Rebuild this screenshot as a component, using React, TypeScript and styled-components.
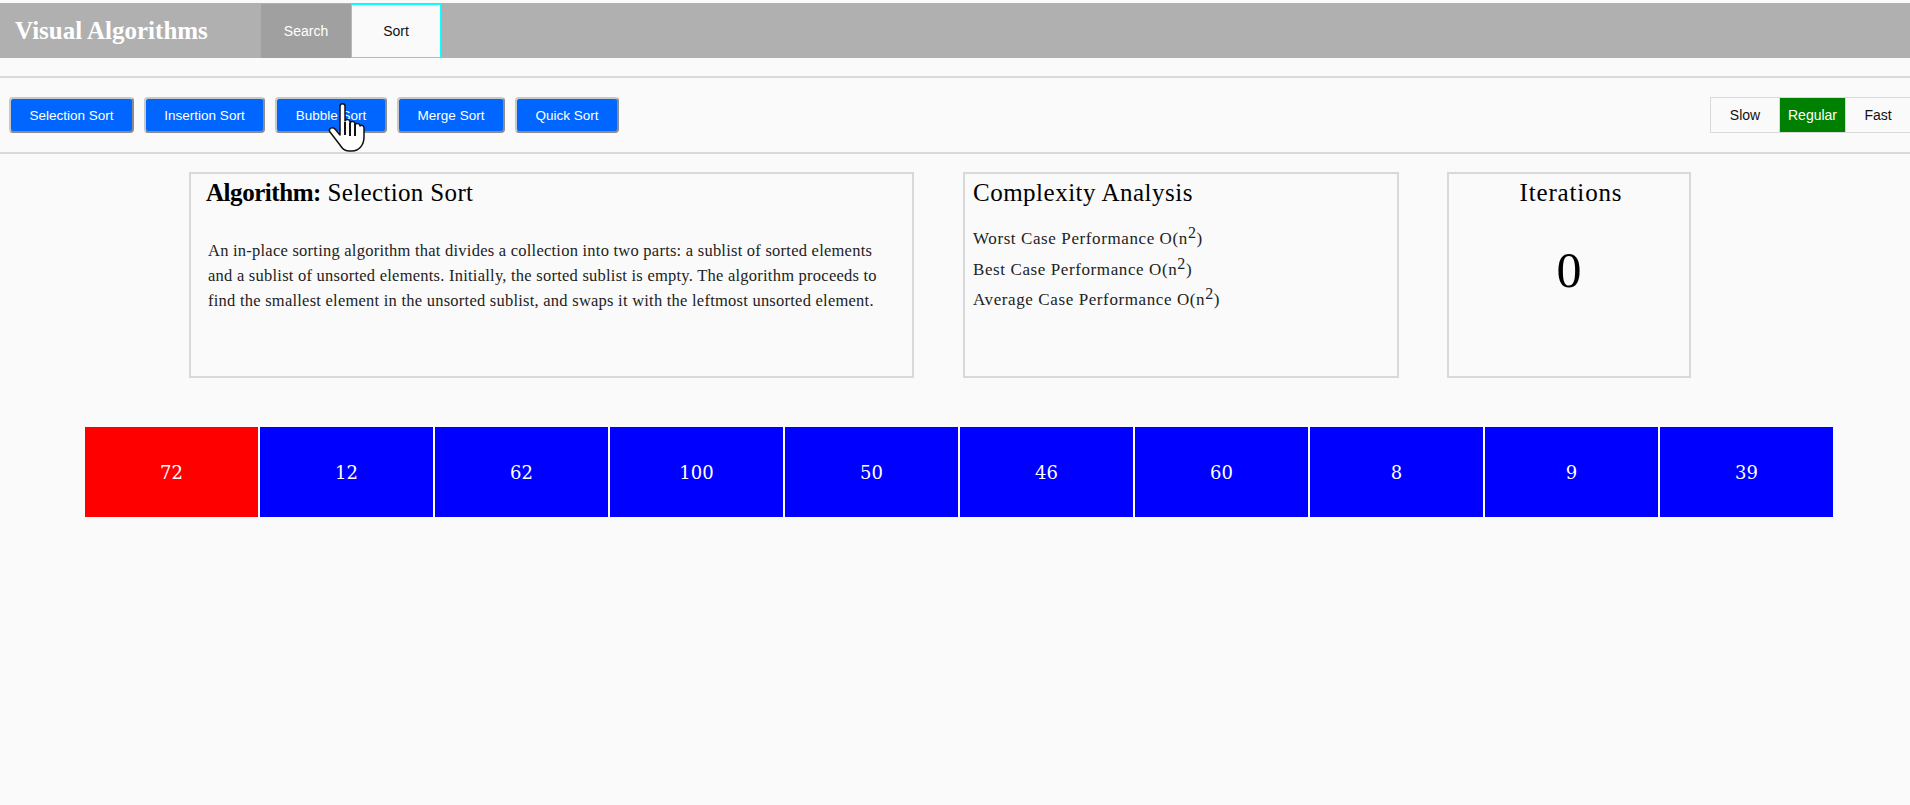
import { createGlobalStyle, styled } from 'styled-components'

const GlobalStyle = createGlobalStyle`
  html, body {
    margin: 0;
    padding: 0;
    background: #fafafa;
    overflow: hidden;
  }
  body {
    font-family: 'Liberation Sans', Arial, sans-serif;
  }
`

const serif = `'Liberation Serif', 'Times New Roman', serif`

const Page = styled.div`
  position: relative;
  height: 805px;
  padding-top: 3px;
  box-sizing: border-box;
  background: #fafafa;
  overflow: hidden;
`

const Header = styled.header`
  display: flex;
  height: 55px;
  background: #b0b0b0;
`

const Logo = styled.div`
  width: 261px;
  box-sizing: border-box;
  padding-left: 15px;
  line-height: 55px;
  font-family: ${serif};
  font-weight: bold;
  font-size: 25px;
  color: #fff;
`

const Tab = styled.div<{ $active?: boolean }>`
  display: flex;
  align-items: center;
  justify-content: center;
  width: 90px;
  margin-top: 1px;
  box-sizing: border-box;
  font-size: 14px;
  color: ${p => (p.$active ? '#111' : '#fff')};
  background: ${p => (p.$active ? '#fafafa' : '#a0a0a0')};
  border: ${p => (p.$active ? '1px solid #1ff' : 'none')};
`

const Toolbar = styled.div`
  display: flex;
  justify-content: space-between;
  align-items: center;
  height: 78px;
  margin-top: 18px;
  box-sizing: border-box;
  padding-left: 9px;
  border-top: 2px solid #d8d8d8;
  border-bottom: 2px solid #d8d8d8;
`

const AlgoButtons = styled.div`
  display: flex;
  gap: 10px;
`

const AlgoButton = styled.button<{ $width: number }>`
  width: ${p => p.$width}px;
  height: 36px;
  padding: 0;
  font-family: 'Liberation Sans', Arial, sans-serif;
  font-size: 13.5px;
  color: #fff;
  background: #0066ff;
  border: 2px solid;
  border-color: #c8c8c8 #8c8c8c #8c8c8c #c8c8c8;
  border-radius: 4px;
`

const SpeedGroup = styled.div`
  display: flex;
  height: 36px;
  margin-right: -1px;
  box-sizing: border-box;
  border: 1px solid #d8d8d8;
`

const Speed = styled.div<{ $width: number; $active?: boolean }>`
  display: flex;
  align-items: center;
  justify-content: center;
  width: ${p => p.$width}px;
  box-sizing: border-box;
  font-size: 14px;
  color: ${p => (p.$active ? '#fff' : '#111')};
  background: ${p => (p.$active ? '#008000' : 'transparent')};
  border-left: ${p => (p.$active ? '1px solid #d8d8d8' : 'none')};
  border-right: ${p => (p.$active ? '1px solid #d8d8d8' : 'none')};
`

const Panels = styled.section`
  display: flex;
  gap: 48px;
  margin-top: 18px;
  padding-left: 189px;
`

const Panel = styled.div<{ $width: number }>`
  width: ${p => p.$width}px;
  height: 206px;
  box-sizing: border-box;
  border: 2px solid #d8d8d8;
  font-family: ${serif};
  color: #111;
`

const AlgorithmPanel = styled(Panel)`
  margin-right: 1px;
`

const PanelTitle = styled.h2<{ $center?: boolean; $left: number; $spacing: number }>`
  margin: 0;
  padding-left: ${p => p.$left}px;
  padding-top: 4px;
  text-align: ${p => (p.$center ? 'center' : 'left')};
  font-size: 25px;
  line-height: 30px;
  font-weight: normal;
  letter-spacing: ${p => p.$spacing}px;
  color: #000;

  b {
    font-weight: bold;
    letter-spacing: -0.45px;
  }
`

const Description = styled.p`
  margin: 30px 0 0;
  padding: 0 24px 0 17px;
  font-size: 16.5px;
  line-height: 25px;
  letter-spacing: 0.24px;
  color: #222;
`

const ComplexityList = styled.div`
  margin-top: 16px;
  padding-left: 8px;
`

const ComplexityRow = styled.div`
  height: 30.5px;
  line-height: 30.5px;
  font-size: 17px;
  letter-spacing: 0.6px;
  color: #222;

  sup {
    font-size: 16px;
    line-height: 0;
    vertical-align: 6px;
  }
`

const Count = styled.div`
  margin-top: 34px;
  text-align: center;
  font-size: 50px;
  line-height: 56px;
  color: #000;
`

const Bars = styled.section`
  display: grid;
  grid-template-columns: repeat(10, 173px);
  gap: 2px;
  margin-top: 49px;
  padding-left: 85px;
`

const Bar = styled.div<{ $current?: boolean }>`
  display: flex;
  align-items: center;
  justify-content: center;
  height: 90px;
  font-family: 'DejaVu Serif', ${serif};
  font-size: 18px;
  color: #fff;
  background: ${p => (p.$current ? '#ff0000' : '#0000ff')};
`

const HandCursor = styled.svg`
  position: absolute;
  left: 328px;
  top: 103px;
  width: 38px;
  height: 49px;
`

const buttons = [
  { name: 'Selection Sort', width: 125 },
  { name: 'Insertion Sort', width: 121 },
  { name: 'Bubble Sort', width: 112 },
  { name: 'Merge Sort', width: 108 },
  { name: 'Quick Sort', width: 104 },
]

const values = [72, 12, 62, 100, 50, 46, 60, 8, 9, 39]

const App = () => (
  <Page>
    <GlobalStyle />
    <Header>
      <Logo>Visual Algorithms</Logo>
      <Tab>Search</Tab>
      <Tab $active>Sort</Tab>
    </Header>

    <Toolbar>
      <AlgoButtons>
        {buttons.map(b => (
          <AlgoButton key={b.name} $width={b.width}>
            {b.name}
          </AlgoButton>
        ))}
      </AlgoButtons>
      <SpeedGroup>
        <Speed $width={68}>Slow</Speed>
        <Speed $width={67} $active>
          Regular
        </Speed>
        <Speed $width={64}>Fast</Speed>
      </SpeedGroup>
    </Toolbar>

    <Panels>
      <AlgorithmPanel $width={725}>
        <PanelTitle $left={15} $spacing={0.35}>
          <b>Algorithm:</b> Selection Sort
        </PanelTitle>
        <Description>
          An in-place sorting algorithm that divides a collection into two parts: a sublist of sorted elements and a
          sublist of unsorted elements. Initially, the sorted sublist is empty. The algorithm proceeds to find the
          smallest element in the unsorted sublist, and swaps it with the leftmost unsorted element.
        </Description>
      </AlgorithmPanel>
      <Panel $width={436}>
        <PanelTitle $left={8} $spacing={0.5}>
          Complexity Analysis
        </PanelTitle>
        <ComplexityList>
          <ComplexityRow>
            Worst Case Performance O(n<sup>2</sup>)
          </ComplexityRow>
          <ComplexityRow>
            Best Case Performance O(n<sup>2</sup>)
          </ComplexityRow>
          <ComplexityRow>
            Average Case Performance O(n<sup>2</sup>)
          </ComplexityRow>
        </ComplexityList>
      </Panel>
      <Panel $width={244}>
        <PanelTitle $left={4} $center $spacing={0.85}>
          Iterations
        </PanelTitle>
        <Count>0</Count>
      </Panel>
    </Panels>

    <Bars>
      {values.map((v, i) => (
        <Bar key={i} $current={i === 0}>
          {v}
        </Bar>
      ))}
    </Bars>

    <HandCursor viewBox="0 0 38 49">
      <path
        d="M12 3c0-3 5-3 5 0v15c1-2 5-2 5 1v1c1-2 5-2 5 1v1c1-2 5-2 5 1 1-1 4-1 4 2v9c0 8-5 14-12 14h-3c-5 0-7-3-9-6L2 29c-2-3 2-6 5-3l5 6z"
        fill="#fff"
        stroke="#111"
        strokeWidth="1.5"
        strokeLinejoin="round"
      />
      <path d="M17 19v13M22 20v13M27 21v12" stroke="#111" strokeWidth="2" fill="none" />
    </HandCursor>
  </Page>
)

export default App
